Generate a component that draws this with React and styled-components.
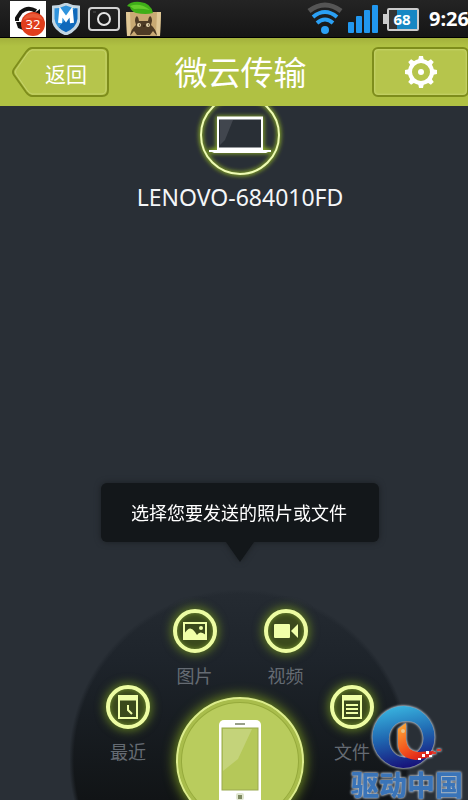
import React from "react";
import styled, { createGlobalStyle } from "styled-components";

const GlobalStyle = createGlobalStyle`
  * {
    box-sizing: border-box;
  }
  body {
    margin: 0;
    background-color: #292f36;
    font-family: "Noto Sans", "Noto Sans CJK SC", sans-serif;
  }
  button {
    margin: 0;
    padding: 0;
    border: 0;
    background: none;
    color: inherit;
    font: inherit;
    cursor: pointer;
  }
  svg {
    display: block;
  }
`;

const Container = styled.div`
  position: relative;
  overflow: hidden;
  min-height: 100vh;
  display: flex;
`;

// the screen is a little wider than the window, the right edge runs off
const Screen = styled.div`
  flex: 1 0 auto;
  width: calc(100% + 12px);
  display: flex;
  flex-direction: column;
`;

const StatusBar = styled.div`
  height: 38px;
  display: flex;
  align-items: center;
  justify-content: space-between;
  padding: 0 11px 0 10px;
  background: linear-gradient(#242424, #151515);
  border-bottom: 1px solid #000;
`;

const StatusGroup = styled.div`
  display: flex;
  align-items: center;
  gap: ${props => props.$gap}px;
`;

const Time = styled.span`
  margin-left: 6px;
  color: #fff;
  font-size: 20px;
  line-height: 24px;
  font-weight: bold;
`;

const Header = styled.header`
  height: 68px;
  display: grid;
  grid-template-columns: 98px 1fr 97px;
  align-items: center;
  padding: 0 11px;
  background: linear-gradient(#a3b13c, #b0c143 8px);
  color: #fff;
`;

const Title = styled.h1`
  margin: 0;
  padding-top: 2px;
  text-align: center;
  font-size: 33px;
  line-height: 40px;
  font-weight: normal;
`;

const BackButton = styled.button`
  display: grid;
  width: 98px;
  height: 50px;
  align-items: center;

  > * {
    grid-area: 1 / 1;
  }
`;

const BackLabel = styled.span`
  padding: 4px 0 0 12px;
  font-size: 21px;
  line-height: 28px;
`;

const SettingsButton = styled.button`
  display: flex;
  width: 97px;
  height: 50px;
  align-items: center;
  justify-content: center;
  border: 2px solid #7e8d1c;
  border-radius: 6px;
  background-color: #b6c54c;
  box-shadow: inset 0 0 2px 1px #c6d36c;
`;

const Main = styled.main`
  flex: 1;
  display: flex;
  flex-direction: column;
  align-items: center;
`;

const Device = styled.div`
  flex: 1;
  display: flex;
  flex-direction: column;
  align-items: center;
`;

const DeviceName = styled.span`
  color: #f4f6f8;
  font-size: 23px;
  line-height: 34px;
`;

const Hint = styled.div`
  display: flex;
  flex-direction: column;
  align-items: center;
  margin-bottom: 28px;
  filter: drop-shadow(0 0 3px #1a1e22);

  &::after {
    content: "";
    width: 28px;
    height: 20px;
    background-color: #13171a;
    clip-path: polygon(0 0, 100% 0, 50% 100%);
  }
`;

const HintText = styled.p`
  margin: 0;
  padding: 17px 32px 15px 30px;
  border-radius: 6px;
  background-color: #13171a;
  color: #fff;
  font-size: 18px;
  line-height: 27px;
`;

const Dock = styled.div`
  height: 210px;
`;

const Disc = styled.div`
  height: 210px;
  width: 340px;
  padding-top: 19px;
  background: radial-gradient(
    circle at 170px 170px,
    transparent 166px,
    #292f36 171px
  ),
  linear-gradient(#252b32, #1e242b 70px, #181d22 130px, #111416 210px);
`;

const DiscRow = styled.div`
  display: flex;
  justify-content: center;
  align-items: flex-start;
  gap: ${props => props.$gap}px;
`;

const Source = styled.button`
  display: flex;
  flex-direction: column;
  align-items: center;
  gap: 14px;
  width: 44px;
`;

const SourceIcon = styled.span`
  display: flex;
  align-items: center;
  justify-content: center;
  width: 44px;
  height: 44px;
  border: 4px solid #edfca2;
  border-radius: 50%;
  background-color: #3b4a1c;
  box-shadow: 0 0 10px 2px #5d7722, inset 0 0 5px #74912c;
`;

const SourceLabel = styled.span`
  color: #656b73;
  font-size: 18px;
  line-height: 18px;
  white-space: nowrap;
`;

const PhoneButton = styled.button`
  display: flex;
  flex: none;
  justify-content: center;
  width: 128px;
  height: 128px;
  margin-top: 12px;
  padding-top: 20px;
  border: 2px solid #dcec8c;
  border-radius: 50%;
  background-color: #b9cc5d;
  box-shadow: 0 0 12px 2px #6c871e, inset 0 0 0 3px #a9bd4c,
    inset 0 0 0 4px #96aa3c;
`;

const Watermark = styled.div`
  position: absolute;
  right: 5px;
  bottom: 0;
  display: flex;
  flex-direction: column;
  align-items: center;
  filter: drop-shadow(0 0 1px #c9d0d8) drop-shadow(0 0 1px #8c97a4);
`;

const WatermarkText = styled.span`
  color: #3a74b8;
  font-family: "Noto Sans CJK SC", sans-serif;
  font-size: 28px;
  line-height: 31px;
  font-weight: 900;
`;

const SyncIcon = () => (
  <svg width="36" height="36" viewBox="0 0 36 36">
    <rect width="36" height="36" fill="#fff" />
    <path
      d="M7 20V17L11 11Q18 5 26 10"
      fill="none"
      stroke="#111"
      strokeWidth="4"
    />
    <path d="M23 13l7-5v8zM6 21h7v8l-5-2z" fill="#111" />
    <circle cx="23" cy="23" r="12" fill="#e03d1c" />
    <path d="M13 19a11 11 0 0 1 20 0q-10-5-20 0z" fill="#e85a38" />
    <text x="23" y="28" textAnchor="middle" fontSize="13" fill="#fff">
      32
    </text>
  </svg>
);

const ShieldIcon = () => (
  <svg width="28" height="32" viewBox="0 0 28 32">
    <defs>
      <linearGradient id="shield" x1="0" y1="0" x2="1" y2="1">
        <stop offset="0.5" stopColor="#2f93dd" />
        <stop offset="0.5" stopColor="#0f69bb" />
      </linearGradient>
    </defs>
    <path
      d="M14 1Q20 4 27 4V16Q26 26 14 31Q2 26 1 16V4Q8 4 14 1Z"
      fill="url(#shield)"
      stroke="#c3d6e2"
      strokeWidth="3"
      strokeLinejoin="round"
    />
    <path d="M8 20L9 9l5 7 5-7 1 11" fill="none" stroke="#fff" strokeWidth="4" />
  </svg>
);

const CameraIcon = () => (
  <svg width="34" height="26" viewBox="0 0 34 26">
    <rect
      x="3"
      y="2"
      width="30"
      height="22"
      rx="3"
      fill="none"
      stroke="#d2d2d2"
      strokeWidth="2"
    />
    <circle cx="18" cy="13" r="6" fill="none" stroke="#e4e4e4" strokeWidth="2" />
    <path d="M7 6h3" stroke="#555" />
  </svg>
);

const TotoroIcon = () => (
  <svg width="36" height="36" viewBox="0 0 36 36">
    <path d="M0 11H35L34 35H1Z" fill="#c9aa74" />
    <path d="M0 11H4L5 35H1ZM35 11H31L30 35H34Z" fill="#e0c896" />
    <path
      d="M4 35Q5 28 10 24L9 20Q9 16 11 15Q13 17 13 20H22Q22 17 24 15Q26 16 26 20L25 24Q30 28 31 35L27 30L24 34H11L8 30Z"
      fill="#4e3b25"
    />
    <circle cx="13" cy="24" r="2" fill="#e2d0a8" />
    <circle cx="22" cy="24" r="2" fill="#e2d0a8" />
    <path d="M13 24h1M17 25h2M22 24h1" stroke="#2a1c0e" strokeWidth="1" />
    <path d="M1 5Q5 0 14 1Q25 2 27 12Q20 14 10 12Q5 10 4 6Z" fill="#3fae18" />
    <path d="M4 5Q14 1 24 9Q14 7 8 8Z" fill="#66cc2c" />
  </svg>
);

const WifiIcon = () => (
  <svg width="36" height="33" viewBox="0 0 36 33" fill="none">
    <path d="M2 9Q18-3 34 9" stroke="#555" strokeWidth="5" />
    <path d="M6 15Q18 5 30 15" stroke="#2ba0f4" strokeWidth="4" />
    <path d="M10 21Q18 14 26 21" stroke="#2ba0f4" strokeWidth="4" />
    <circle cx="18" cy="28" r="4" fill="#2ba0f4" />
  </svg>
);

const SignalIcon = () => (
  <svg width="32" height="30" viewBox="0 0 32 30" fill="#2197ef">
    <rect x="1" y="18" width="6" height="11" rx="1" />
    <rect x="9" y="12" width="6" height="17" rx="1" />
    <rect x="17" y="6" width="6" height="23" rx="1" />
    <rect x="25" y="1" width="6" height="28" rx="1" />
  </svg>
);

const BatteryIcon = () => (
  <svg width="36" height="24" viewBox="0 0 36 24">
    <rect x="0" y="7" width="5" height="10" fill="#ccc" />
    <rect
      x="5"
      y="2"
      width="30"
      height="21"
      rx="1"
      fill="#333"
      stroke="#ccc"
      strokeWidth="2"
    />
    <rect x="14" y="3" width="20" height="19" fill="#1687c4" />
    <text
      x="19"
      y="18"
      textAnchor="middle"
      fontSize="15"
      fontWeight="bold"
      fill="#fff"
    >
      68
    </text>
  </svg>
);

const BackShape = () => (
  <svg width="98" height="50" viewBox="0 0 98 50">
    <path
      d="M21 1H91Q97 1 97 7V43Q97 49 91 49H21Q18 49 15 45L3 28Q1 25 3 22L15 5Q18 1 21 1Z"
      fill="#b6c54c"
      stroke="#7e8d1c"
      strokeWidth="2"
    />
    <path
      d="M21 3H90Q95 3 95 8V42Q95 47 90 47H21Q18 46 16 43L5 27Q4 25 5 23L16 7Q18 4 21 3Z"
      fill="none"
      stroke="#c6d36c"
    />
  </svg>
);

const GearIcon = () => (
  <svg width="32" height="32" viewBox="0 0 32 32">
    <circle cx="16" cy="16" r="11" fill="none" stroke="#fff" strokeWidth="4" />
    <circle cx="16" cy="16" r="3" fill="#fff" />
    {[0, 45, 90, 135, 180, 225, 270, 315].map(angle => (
      <path
        key={angle}
        d="M13 5L14 0H18L19 5Z"
        fill="#fff"
        transform={`rotate(${angle} 16 16)`}
      />
    ))}
  </svg>
);

const LaptopIcon = () => (
  <svg width="100" height="74" viewBox="0 0 100 74">
    <defs>
      <filter id="glow" x="-20%" y="-20%" width="140%" height="140%">
        <feGaussianBlur stdDeviation="2" />
      </filter>
    </defs>
    <g fill="none" stroke="#8fb025" filter="url(#glow)">
      <circle cx="50" cy="29" r="39" strokeWidth="4" />
      <rect x="28" y="12" width="44" height="32" strokeWidth="4" />
      <path d="M19 45H81" strokeWidth="5" />
    </g>
    <circle
      cx="50"
      cy="29"
      r="39"
      fill="none"
      stroke="#eefbb4"
      strokeWidth="2"
    />
    <rect
      x="28"
      y="12"
      width="44"
      height="32"
      rx="1"
      fill="#292f36"
      stroke="#fff"
      strokeWidth="2"
    />
    <path d="M27 12H73" stroke="#fff" strokeWidth="3" />
    <path d="M30 14H43L35 34L30 39Z" fill="#41464e" />
    <path d="M19 44H81V46H78L76 47H24L22 46H19Z" fill="#fff" />
    <path d="M27 43H73" stroke="#fff" strokeWidth="3" />
  </svg>
);

const PhoneIcon = () => (
  <svg width="44" height="86" viewBox="0 0 44 86">
    <rect x="1" y="1" width="42" height="85" rx="5" fill="#fff" />
    <rect x="4" y="9" width="36" height="62" fill="#b5c859" stroke="#9aaa50" />
    <path d="M5 10H34L20 40L5 52Z" fill="#c4d37a" />
    <path d="M17 5H27" stroke="#98a08a" strokeWidth="2" />
    <rect x="18" y="74" width="8" height="7" rx="2" fill="#dfe5cf" />
    <rect x="20" y="76" width="4" height="4" fill="#7e8962" />
  </svg>
);

const RecentIcon = () => (
  <svg width="20" height="24" viewBox="0 0 20 24" fill="none">
    <rect x="1" y="1" width="18" height="22" stroke="#f0ffa8" strokeWidth="2" />
    <path d="M1 3H19" stroke="#f0ffa8" strokeWidth="5" />
    <path d="M10 10V15L14 19" stroke="#f0ffa8" strokeWidth="2" />
  </svg>
);

const PictureIcon = () => (
  <svg width="24" height="18" viewBox="0 0 24 18">
    <rect
      x="1"
      y="1"
      width="22"
      height="16"
      fill="none"
      stroke="#f0ffa8"
      strokeWidth="2"
    />
    <circle cx="18" cy="6" r="2" fill="#f0ffa8" />
    <path d="M1 12Q7 2 12 10L14 13Q17 8 23 13V18H1Z" fill="#f0ffa8" />
  </svg>
);

const VideoIcon = () => (
  <svg width="24" height="14" viewBox="0 0 24 14" fill="#f0ffa8">
    <rect width="16" height="14" rx="1" />
    <path d="M17 7L24 0V14Z" />
  </svg>
);

const FileIcon = () => (
  <svg width="20" height="24" viewBox="0 0 20 24" fill="none" stroke="#f0ffa8">
    <rect x="1" y="1" width="18" height="22" strokeWidth="2" />
    <path d="M1 3H19" strokeWidth="5" />
    <path d="M4 10H16M4 14H16M4 18H16" strokeWidth="2" />
  </svg>
);

const WatermarkLogo = () => (
  <svg width="70" height="64" viewBox="0 0 70 64">
    <defs>
      <linearGradient id="ring" x1="0.3" y1="0" x2="0.5" y2="1">
        <stop offset="0" stopColor="#39b5e0" />
        <stop offset="0.5" stopColor="#1f66b0" />
        <stop offset="1" stopColor="#17127a" />
      </linearGradient>
      <linearGradient id="flame" x1="0" y1="0" x2="0.6" y2="1">
        <stop offset="0" stopColor="#fbb03b" />
        <stop offset="0.6" stopColor="#f4571d" />
        <stop offset="1" stopColor="#dd1f1a" />
      </linearGradient>
    </defs>
    <path
      fillRule="evenodd"
      fill="url(#ring)"
      d="M32 1A31 31 0 1 1 31 63A31 31 0 1 1 32 1ZM34 16C22 16 16 26 17 36C18 48 27 54 36 52C47 49 53 40 51 30C49 20 43 16 34 16Z"
    />
    <path
      d="M26 24L34 18V35Q35 46 46 47L62 46L58 52L44 55Q26 53 26 38Z"
      fill="url(#flame)"
    />
    <circle cx="31" cy="26" r="2" fill="#e9c48a" />
    <path
      d="M50 49h3v3h-3zM54 46h3v3h-3zM57 50h3v2h-3zM46 53h3v2h-3z"
      fill="#fff"
    />
    <path d="M60 47h4v2h-4zM65 44h4v2h-4z" fill="#e23a2a" />
  </svg>
);

const topSources = [
  { label: "图片", Icon: PictureIcon },
  { label: "视频", Icon: VideoIcon }
];

const SourceButton = ({ label, Icon }) => (
  <Source type="button">
    <SourceIcon>
      <Icon />
    </SourceIcon>
    <SourceLabel>{label}</SourceLabel>
  </Source>
);

const App = () => (
  <Container lang="zh-CN">
    <GlobalStyle />
    <Screen>
      <StatusBar>
        <StatusGroup $gap={6}>
          <SyncIcon />
          <ShieldIcon />
          <CameraIcon />
          <TotoroIcon />
        </StatusGroup>
        <StatusGroup $gap={4}>
          <WifiIcon />
          <SignalIcon />
          <BatteryIcon />
          <Time>9:26</Time>
        </StatusGroup>
      </StatusBar>
      <Header>
        <BackButton type="button">
          <BackShape />
          <BackLabel>返回</BackLabel>
        </BackButton>
        <Title>微云传输</Title>
        <SettingsButton type="button" aria-label="设置">
          <GearIcon />
        </SettingsButton>
      </Header>
      <Main>
        <Device>
          <LaptopIcon />
          <DeviceName>LENOVO-684010FD</DeviceName>
        </Device>
        <Hint>
          <HintText>选择您要发送的照片或文件</HintText>
        </Hint>
        <Dock>
          <Disc>
            <DiscRow $gap={47}>
              {topSources.map(source => (
                <SourceButton key={source.label} {...source} />
              ))}
            </DiscRow>
            <DiscRow $gap={26}>
              <SourceButton label="最近" Icon={RecentIcon} />
              <PhoneButton type="button" aria-label="手机">
                <PhoneIcon />
              </PhoneButton>
              <SourceButton label="文件" Icon={FileIcon} />
            </DiscRow>
          </Disc>
        </Dock>
      </Main>
    </Screen>
    <Watermark>
      <WatermarkLogo />
      <WatermarkText>驱动中国</WatermarkText>
    </Watermark>
  </Container>
);

export default App;
